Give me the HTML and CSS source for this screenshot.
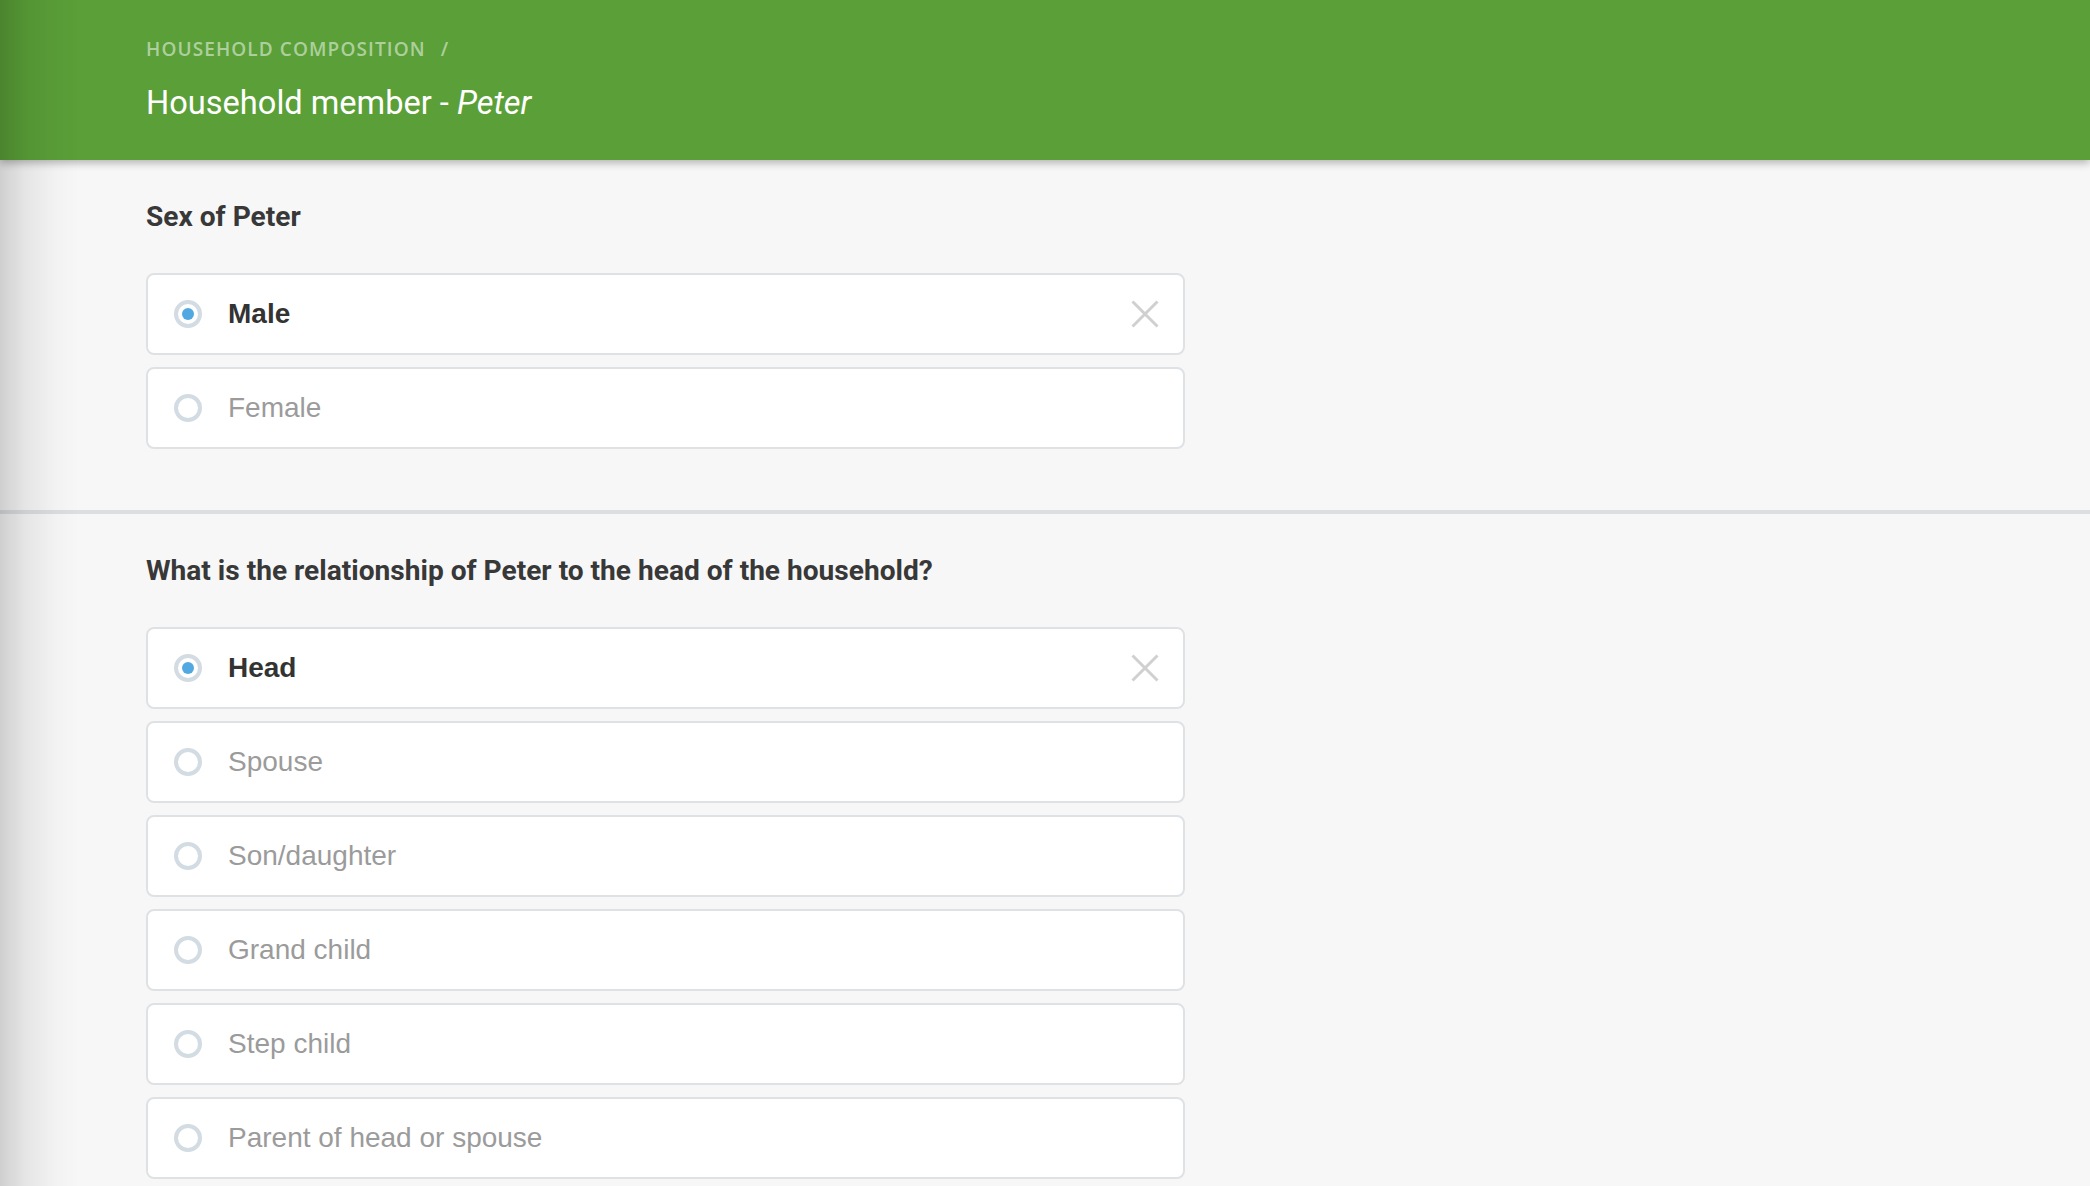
FILE: index.html
```html
<!DOCTYPE html>
<html lang="en">
<head>
<meta charset="utf-8">
<title>Household member - Peter</title>
<link rel="stylesheet" href="styles.css">
</head>
<body>
<div class="edge-shadow"></div>
<header class="topbar">
  <div class="crumbs"><span>Household composition</span><span class="sep">/</span></div>
  <h1 class="title">Household member - <em>Peter</em></h1>
</header>
<main>
  <section class="question">
    <h2 class="q-label">Sex of Peter</h2>
    <div class="options">
      <label class="option selected"><span class="radio"></span><span class="opt-text">Male</span>
        <svg class="clear" width="28" height="28" viewBox="0 0 28 28"><path d="M1.5 1.5 L26.5 26.5 M26.5 1.5 L1.5 26.5" stroke="#d0d0d0" stroke-width="3" fill="none"/></svg>
      </label>
      <label class="option"><span class="radio"></span><span class="opt-text">Female</span></label>
    </div>
  </section>
  <section class="question">
    <h2 class="q-label">What is the relationship of Peter to the head of the household?</h2>
    <div class="options">
      <label class="option selected"><span class="radio"></span><span class="opt-text">Head</span>
        <svg class="clear" width="28" height="28" viewBox="0 0 28 28"><path d="M1.5 1.5 L26.5 26.5 M26.5 1.5 L1.5 26.5" stroke="#d0d0d0" stroke-width="3" fill="none"/></svg>
      </label>
      <label class="option"><span class="radio"></span><span class="opt-text">Spouse</span></label>
      <label class="option"><span class="radio"></span><span class="opt-text">Son/daughter</span></label>
      <label class="option"><span class="radio"></span><span class="opt-text">Grand child</span></label>
      <label class="option"><span class="radio"></span><span class="opt-text">Step child</span></label>
      <label class="option"><span class="radio"></span><span class="opt-text">Parent of head or spouse</span></label>
    </div>
  </section>
</main>
</body>
</html>
```
FILE: styles.css
```css
html, body {
  margin: 0;
  padding: 0;
}
body {
  background: #f7f7f7;
  font-family: Roboto, "Liberation Sans", sans-serif;
  color: #333;
  overflow: hidden;
}
.edge-shadow {
  position: fixed;
  top: 0;
  left: 0;
  bottom: 0;
  width: 80px;
  background: linear-gradient(to right, rgba(0,0,0,0.16) 0, rgba(0,0,0,0.07) 25px, rgba(0,0,0,0.02) 55px, rgba(0,0,0,0) 80px);
  z-index: 5;
  pointer-events: none;
}
.topbar {
  position: relative;
  z-index: 2;
  height: 160px;
  box-sizing: border-box;
  padding: 37px 0 0 146px;
  background: #5a9f38;
  box-shadow: 0 3px 8px rgba(0,0,0,0.28);
}
.crumbs {
  font-family: "Open Sans", sans-serif;
  font-weight: 600;
  font-size: 19px;
  line-height: 24px;
  letter-spacing: 1.1px;
  text-transform: uppercase;
  color: rgba(255,255,255,0.52);
}
.crumbs .sep {
  margin-left: 15px;
}
.title {
  margin: 22px 0 0;
  font-family: Roboto, sans-serif;
  font-weight: 400;
  font-size: 32.6px;
  line-height: 40px;
  color: #fff;
}
.title em {
  font-style: italic;
}
.question {
  padding: 40px 0 61px 146px;
}
.question + .question {
  border-top: 4px solid #dcdfe2;
}
.q-label {
  margin: 0 0 39px;
  font-family: Roboto, sans-serif;
  font-weight: 700;
  font-size: 28.1px;
  line-height: 34px;
  color: #383838;
}
.options {
  display: flex;
  flex-direction: column;
  gap: 12px;
}
.option {
  display: flex;
  align-items: center;
  box-sizing: border-box;
  width: 1039px;
  height: 82px;
  padding: 0 24px 0 26px;
  background: #fff;
  border: 2px solid #dfe2e5;
  border-radius: 8px;
}
.radio {
  box-sizing: border-box;
  flex: none;
  width: 28px;
  height: 28px;
  border: 4px solid #d3dce3;
  border-radius: 50%;
  background: #fff;
  display: flex;
  align-items: center;
  justify-content: center;
}
.selected .radio::after {
  content: "";
  width: 12px;
  height: 12px;
  border-radius: 50%;
  background: #52a9e1;
}
.opt-text {
  flex: 1;
  margin-left: 26px;
  font-family: "Liberation Sans", Arial, sans-serif;
  font-size: 28px;
  color: #9b9b9b;
}
.selected .opt-text {
  font-weight: 700;
  color: #333;
}
.clear {
  flex: none;
  display: block;
}
```
